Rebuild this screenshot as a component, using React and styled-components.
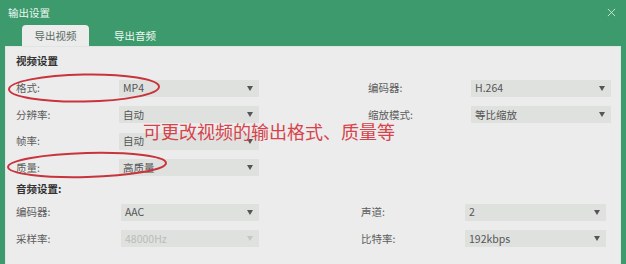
import React from 'react';
import styled, { createGlobalStyle } from 'styled-components';

const GlobalStyle = createGlobalStyle`
  html, body {
    margin: 0;
    padding: 0;
    background: #3c9a6d;
  }
  body {
    font-family: "Noto Sans CJK SC", "Noto Sans", sans-serif;
  }
`;

const StyledWindow = styled.div`
  position: relative;
  width: 626px;
  height: 264px;
  background: #3c9a6d;
  overflow: hidden;
  display: flex;
  flex-direction: column;
`;

const StyledTitleBar = styled.div`
  height: 25px;
  display: flex;
  align-items: center;
  justify-content: space-between;
  padding: 0 10px 0 8px;
  color: #eef7f1;
  font-size: 10.5px;
`;

const StyledClose = styled.svg`
  width: 9px;
  height: 9px;
`;

const StyledTabs = styled.div`
  height: 21px;
  display: flex;
  align-items: flex-end;
  padding-left: 22px;
  gap: 24px;
`;

const StyledTab = styled.div`
  height: 21px;
  display: flex;
  align-items: center;
  justify-content: center;
  font-size: 10.5px;
  white-space: nowrap;
  border-radius: 4px 4px 0 0;
  color: ${({ $active }) => ($active ? '#5b6b62' : '#eef7f1')};
  background: ${({ $active }) => ($active ? '#ececec' : 'transparent')};
  width: ${({ $active }) => ($active ? '67px' : '44px')};
`;

const StyledPanel = styled.div`
  flex: 1;
  margin: 0 5px 0 5px;
  background: #ececec;
  border: 1px solid #dfe6e2;
  border-bottom: none;
  padding: 7px 0 0 10px;
`;

const StyledSectionTitle = styled.div`
  font-size: 10.5px;
  font-weight: 700;
  color: #333;
  height: 14px;
  line-height: 14px;
  margin-bottom: ${({ $gap }) => $gap}px;
`;

const StyledGrid = styled.div`
  display: grid;
  grid-template-columns: ${({ $cols }) => $cols};
  grid-auto-rows: ${({ $row }) => $row}px;
  align-items: center;
  margin-bottom: ${({ $gap }) => $gap || 0}px;
`;

const StyledLabel = styled.div`
  font-size: 10.5px;
  line-height: 12px;
  color: #5c5c5c;
`;

const StyledSelect = styled.div`
  height: 17px;
  background: #dfe1df;
  display: flex;
  align-items: center;
  justify-content: space-between;
  padding: 0 6px 0 4px;
  font-size: 10.5px;
  line-height: 12px;
  color: ${({ $disabled }) => ($disabled ? '#b9bcb9' : '#555')};
`;

const StyledArrow = styled.span`
  width: 0;
  height: 0;
  border-left: 3.5px solid transparent;
  border-right: 3.5px solid transparent;
  border-top: 5px solid ${({ $disabled }) => ($disabled ? '#c4c6c4' : '#555')};
`;

const StyledNote = styled.div`
  position: absolute;
  left: 143px;
  top: 122px;
  font-size: 18px;
  line-height: 18px;
  color: #d6434b;
  white-space: nowrap;
`;

const StyledMarks = styled.svg`
  position: absolute;
  left: 0;
  top: 0;
  pointer-events: none;
`;

const Select = ({ value, disabled }) => (
  <StyledSelect $disabled={disabled}>
    <span>{value}</span>
    <StyledArrow $disabled={disabled} />
  </StyledSelect>
);

const Empty = () => <span />;

const App = () => {
  return (
    <StyledWindow>
      <GlobalStyle />
      <StyledTitleBar>
        <span>输出设置</span>
        <StyledClose viewBox="0 0 10 10">
          <path d="M1 1 L9 9 M9 1 L1 9" stroke="#cfe9db" strokeWidth="1" fill="none" />
        </StyledClose>
      </StyledTitleBar>
      <StyledTabs>
        <StyledTab $active>导出视频</StyledTab>
        <StyledTab>导出音频</StyledTab>
      </StyledTabs>
      <StyledPanel>
        <StyledSectionTitle $gap={7}>视频设置</StyledSectionTitle>
        <StyledGrid $cols="103px 140px 109px 103px 140px" $row={26.5} $gap={1}>
          <StyledLabel>格式:</StyledLabel>
          <Select value="MP4" />
          <Empty />
          <StyledLabel>编码器:</StyledLabel>
          <Select value="H.264" />

          <StyledLabel>分辨率:</StyledLabel>
          <Select value="自动" />
          <Empty />
          <StyledLabel>缩放模式:</StyledLabel>
          <Select value="等比缩放" />

          <StyledLabel>帧率:</StyledLabel>
          <Select value="自动" />
          <Empty />
          <Empty />
          <Empty />

          <StyledLabel>质量:</StyledLabel>
          <Select value="高质量" />
          <Empty />
          <Empty />
          <Empty />
        </StyledGrid>
        <StyledSectionTitle $gap={3}>音频设置:</StyledSectionTitle>
        <StyledGrid $cols="105px 138px 102px 104px 141px" $row={26.5}>
          <StyledLabel>编码器:</StyledLabel>
          <Select value="AAC" />
          <Empty />
          <StyledLabel>声道:</StyledLabel>
          <Select value="2" />

          <StyledLabel>采样率:</StyledLabel>
          <Select value="48000Hz" disabled />
          <Empty />
          <StyledLabel>比特率:</StyledLabel>
          <Select value="192kbps" />
        </StyledGrid>
      </StyledPanel>
      <StyledNote>可更改视频的输出格式、质量等</StyledNote>
      <StyledMarks width="626" height="264" viewBox="0 0 626 264">
        <ellipse cx="84" cy="88" rx="75" ry="13.5" fill="none" stroke="#c9333b" strokeWidth="2" transform="rotate(-1 84 88)" />
        <ellipse cx="87" cy="165" rx="79" ry="12" fill="none" stroke="#c9333b" strokeWidth="2" transform="rotate(-1.5 87 165)" />
      </StyledMarks>
    </StyledWindow>
  );
};

export default App;
